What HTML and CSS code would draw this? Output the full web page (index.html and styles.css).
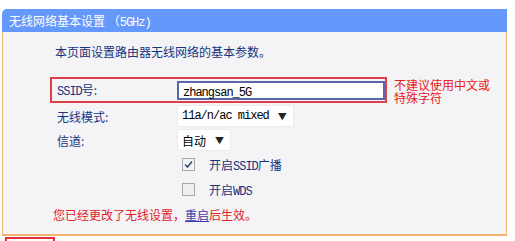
FILE: index.html
```html
<!DOCTYPE html>
<html lang="zh-CN">
<head>
<meta charset="utf-8">
<title>无线网络基本设置</title>
<link rel="stylesheet" href="styles.css">
</head>
<body>
<div class="panel">
  <div class="header">无线网络基本设置 （<span class="m">5GHz)</span></div>
  <div class="body">
    <p class="intro">本页面设置路由器无线网络的基本参数。</p>
    <div class="form">
      <div class="ssid-wrap">
        <div class="row ssid">
          <span class="label"><span class="m">SSID</span>号:</span>
          <span class="input"><span class="m">zhangsan_5G</span></span>
        </div>
        <div class="note">不建议使用中文或<br>特殊字符</div>
      </div>
      <div class="row">
        <span class="label">无线模式:</span>
        <span class="select"><span class="m">11a/n/ac mixed</span><span class="arrow">▼</span></span>
      </div>
      <div class="row">
        <span class="label">信道:</span>
        <span class="select">自动<span class="arrow">▼</span></span>
      </div>
      <div class="row check-row">
        <span class="label"></span>
        <span class="box">
          <svg width="13" height="13" viewBox="0 0 13 13"><rect x="0.5" y="0.5" width="12" height="12" fill="#f4f4f4" stroke="#a9a9a9"/><path d="M3 6.5 L5.5 9 L10 3.5" fill="none" stroke="#3a4a78" stroke-width="1.6"/></svg>
        </span>
        <span class="ctext">开启<span class="m">SSID</span>广播</span>
      </div>
      <div class="row check-row">
        <span class="label"></span>
        <span class="box">
          <svg width="13" height="13" viewBox="0 0 13 13"><rect x="0.5" y="0.5" width="12" height="12" fill="#eeeeee" stroke="#a9a9a9"/></svg>
        </span>
        <span class="ctext">开启<span class="m">WDS</span></span>
      </div>
    </div>
    <p class="msg">您已经更改了无线设置，<a class="link">重启</a>后生效。</p>
  </div>
</div>
<div class="tab"></div>
</body>
</html>
```
FILE: styles.css
```css
html, body {
  margin: 0;
  padding: 0;
  background: #ffffff;
}
body {
  font-family: "Noto Sans CJK SC", "Liberation Sans", sans-serif;
  font-size: 12px;
  color: #17347f;
}
.m {
  font-family: "Liberation Mono", "Noto Sans CJK SC", monospace;
  font-size: 12px;
  letter-spacing: -1px;
}
.panel {
  margin: 9px 8px 0 2px;
}
.header {
  height: 23px;
  line-height: 23px;
  background: #6498fb;
  color: #ffffff;
  padding-left: 7px;
  border-top-left-radius: 5px;
}
.body {
  background: #f4f4f6;
  border-left: 1px solid #f2b36c;
  border-right: 1px solid #f2b36c;
  border-bottom: 2px solid #f2b36c;
  height: 202px;
  display: flex;
  flex-direction: column;
}
.intro {
  margin: 10px 0 0 52px;
  line-height: 20px;
}
.form {
  margin: 15px 0 0 47px;
  display: flex;
  flex-direction: column;
}
.ssid-wrap {
  display: flex;
  align-items: flex-start;
}
.row {
  display: flex;
  align-items: center;
  height: 24px;
  padding-left: 7px;
}
.ssid {
  width: 328px;
  height: 22px;
  border: 2px solid #e04048;
  padding-left: 5px;
}
.label {
  width: 120px;
  flex: none;
}
.input {
  width: 201px;
  height: 15px;
  line-height: 15px;
  border: 2px solid #5a67ab;
  background: #ffffff;
  color: #000;
  padding-left: 4px;
}
.note {
  color: #e82020;
  font-size: 12px;
  line-height: 13px;
  margin: 1px 0 0 7px;
}
.select {
  display: flex;
  align-items: center;
  height: 20px;
  background: #ffffff;
  color: #000;
  padding: 0 6px 0 4px;
  border: 1px solid #ececec;
}
.arrow {
  font-size: 9px;
  margin-left: 9px;
  color: #222;
}
.check-row {
  height: 25px;
}
.box {
  width: 13px;
  height: 13px;
  margin-left: 5px;
  display: flex;
}
.ctext {
  margin-left: 14px;
}
.msg {
  margin: 1px 0 0 50px;
  line-height: 24px;
  color: #e0202a;
}
.link {
  color: #3b3ba8;
  text-decoration: underline;
}
.tab {
  margin: 1px 0 0 5px;
  width: 46px;
  height: 4px;
  border: 2px solid #e03038;
  border-bottom: none;
}
```
